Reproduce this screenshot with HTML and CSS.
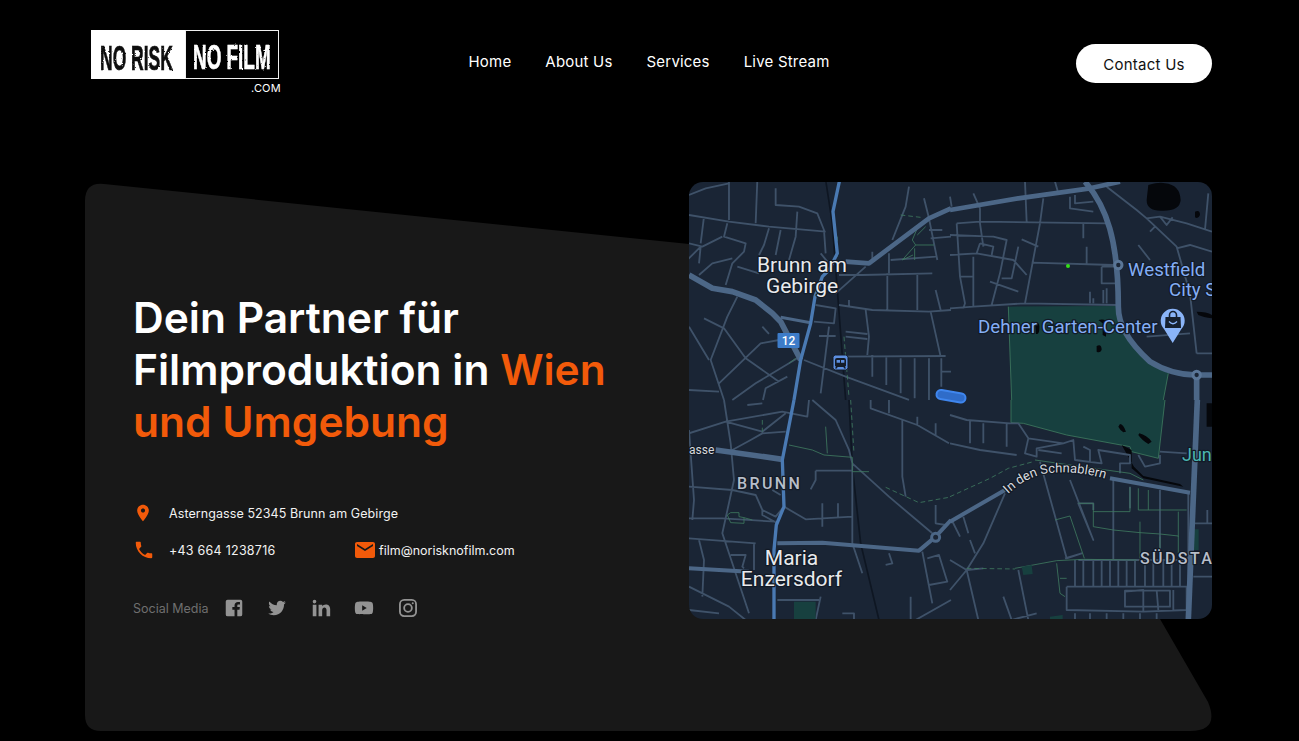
FILE: index.html
```html
<!DOCTYPE html>
<html lang="de">
<head>
<meta charset="utf-8">
<title>No Risk No Film</title>
<link rel="stylesheet" href="styles.css">
</head>
<body>
<div class="page">
  <header class="header">
    <a class="logo" href="#">
      <svg class="logo-svg" width="190" height="66" viewBox="0 0 190 66">
        <defs>
          <filter id="grunge" x="-5%" y="-5%" width="110%" height="110%">
            <feTurbulence type="fractalNoise" baseFrequency="0.7" numOctaves="2" seed="4"/>
            <feDisplacementMap in="SourceGraphic" scale="2.2"/>
          </filter>
        </defs>
        <rect x="0" y="0" width="94" height="49" class="logo-white"/>
        <rect x="94.500" y="0.500" width="93" height="48" class="logo-black"/>
        <g filter="url(#grunge)">
          <text transform="translate(9 39.500) scale(.5 1)" class="logo-word logo-dark">NO RISK</text>
          <text transform="translate(102 38.500) scale(.54 1)" class="logo-word logo-light">NO FILM</text>
        </g>
        <text x="160" y="62" class="logo-com">.COM</text>
      </svg>
    </a>
    <nav class="nav">
      <a href="#">Home</a>
      <a href="#">About Us</a>
      <a href="#">Services</a>
      <a href="#">Live Stream</a>
    </nav>
    <a class="cta" href="#">Contact Us</a>
  </header>

  <section class="hero">
    <svg class="hero-shape" width="1127" height="549" viewBox="0 0 1127 549">
      <path d="M0 19 Q0 0 19 2 L604 62 L1075 437 L1123 520 Q1135 549 1105 549 L16 549 Q0 549 0 533 Z"/>
    </svg>
    <div class="hero-copy">
      <h1 class="title">Dein Partner für<br>Filmproduktion in <span class="accent">Wien<br>und Umgebung</span></h1>
      <div class="contact-row">
        <span class="contact-item address">
          <svg class="ico pin" viewBox="0 0 24 24"><path d="M12 2C8.13 2 5 5.13 5 9c0 5.25 7 13 7 13s7-7.75 7-13c0-3.87-3.13-7-7-7zm0 9.500c-1.380 0-2.500-1.120-2.500-2.500s1.120-2.500 2.500-2.500 2.500 1.120 2.500 2.500-1.120 2.500-2.500 2.500z"/></svg>
          Asterngasse 52345 Brunn am Gebirge
        </span>
      </div>
      <div class="contact-row second">
        <span class="contact-item phone">
          <svg class="ico" viewBox="0 0 24 24"><path d="M6.62 10.79c1.44 2.83 3.76 5.14 6.59 6.59l2.2-2.2c.27-.27.67-.36 1.02-.24 1.12.37 2.33.57 3.57.57.55 0 1 .45 1 1V20c0 .55-.45 1-1 1-9.39 0-17-7.61-17-17 0-.55.45-1 1-1h3.5c.55 0 1 .45 1 1 0 1.25.2 2.45.57 3.57.11.35.03.74-.25 1.02l-2.2 2.2z"/></svg>
          +43 664 1238716
        </span>
        <span class="contact-item mail">
          <svg class="ico mail-ico" viewBox="0 0 24 24"><path d="M20 4H4c-1.1 0-2 .9-2 2v12c0 1.1.9 2 2 2h16c1.1 0 2-.9 2-2V6c0-1.1-.9-2-2-2zm0 4l-8 5-8-5V6l8 5 8-5v2z"/></svg>
          film@norisknofilm.com
        </span>
      </div>
      <div class="social">
        <span class="social-label">Social Media</span>
        <svg class="soc" viewBox="0 0 24 24"><path d="M19 3H5a2 2 0 0 0-2 2v14a2 2 0 0 0 2 2h7.600v-7h-2.400v-3h2.400V9.200c0-2.500 1.500-3.800 3.700-3.800 1 0 1.900.1 2.200.1v2.600h-1.500c-1.200 0-1.400.6-1.400 1.400V11h2.800l-.4 3h-2.400v7H19a2 2 0 0 0 2-2V5a2 2 0 0 0-2-2z"/></svg>
        <svg class="soc" viewBox="-3 -3 30 30"><path d="M23.954 4.569c-.885.389-1.83.654-2.825.775 1.014-.611 1.794-1.574 2.163-2.723-.951.555-2.005.959-3.127 1.184-.896-.959-2.173-1.559-3.591-1.559-2.717 0-4.92 2.203-4.92 4.917 0 .39.045.765.127 1.124C7.691 8.094 4.066 6.13 1.64 3.161c-.427.722-.666 1.561-.666 2.475 0 1.71.87 3.213 2.188 4.096-.807-.026-1.566-.248-2.228-.616v.061c0 2.385 1.693 4.374 3.946 4.827-.413.111-.849.171-1.296.171-.314 0-.615-.03-.916-.086.631 1.953 2.445 3.377 4.604 3.417-1.68 1.319-3.809 2.105-6.102 2.105-.39 0-.779-.023-1.17-.067 2.189 1.394 4.768 2.209 7.557 2.209 9.054 0 13.999-7.496 13.999-13.986 0-.209 0-.42-.015-.63.961-.689 1.8-1.56 2.46-2.548l-.047-.02z"/></svg>
        <svg class="soc" viewBox="0 0 24 24"><path d="M6.94 5a2 2 0 1 1-4-.002 2 2 0 0 1 4 .002zM7 8.48H3V21h4V8.48zm6.32 0H9.34V21h3.94v-6.57c0-3.66 4.77-4 4.77 0V21H22v-7.93c0-6.17-7.06-5.94-8.72-2.91l.04-1.68z"/></svg>
        <svg class="soc" viewBox="0 0 24 24"><path d="M21.500 7.200c-.2-.9-.9-1.600-1.800-1.800C18.200 5 12 5 12 5s-6.200 0-7.700.4c-.9.2-1.600.9-1.800 1.800C2 8.700 2 12 2 12s0 3.300.5 4.800c.2.900.9 1.600 1.800 1.800 1.500.4 7.700.4 7.700.4s6.200 0 7.700-.4c.9-.2 1.600-.9 1.800-1.800.5-1.500.5-4.800.5-4.800s0-3.300-.5-4.800zM10 15V9l5 3-5 3z"/></svg>
        <svg class="soc soc-line" viewBox="0 0 24 24"><rect x="3.200" y="3.200" width="17.600" height="17.600" rx="4.600"/><circle cx="12" cy="12" r="4.200"/><circle cx="17.200" cy="6.800" r="1.100" class="soc-dot"/></svg>
      </div>
    </div>

    <div class="map">
      <svg class="map-svg" width="523" height="437" viewBox="689 182 523 437">
        <defs>
          <path id="schnabel" d="M1008 494 Q1026 477 1048 473 Q1080 470 1112 481"/>
        </defs>
        <rect x="689" y="182" width="523" height="437" class="m-bg"/>

        <!-- top left -->
        <g transform="translate(689 180) scale(.3333)">
          <path class="m-rail" d="M410 0 L430 130 L470 660"/>
          <path class="m-minor" d="M0 45L50 25L120 10M120 0V120M205 0L200 130M260 25V75L330 80L385 100L405 150L410 220M0 105L120 125L240 140L410 155M45 110L35 190M115 130L105 170L170 190L165 215L130 250L110 315M0 190L40 200L100 170M-5 240L35 200L30 250M30 285L70 250L130 235M240 145L225 195L210 225M275 150L260 225M325 95L320 170L300 240M145 260L210 280M145 350L115 410L65 540L105 660M45 415L105 445L170 535L270 605M0 440L60 540M270 480L215 490L90 610M220 440L240 462M325 535L200 610L130 660M0 630L90 635M295 590L230 625L222 660M345 540L470 590L660 660M450 375L550 390L720 395L786 390M480 360V380M530 390L540 470L535 525M440 530L770 528M550 525V590M592 530V615M635 535V640M677 535V655M720 535V660M757 535V620M725 395L755 530M757 575H786M450 285L520 285L730 280M595 280V390M685 285V390M600 220V280M740 330L755 390M605 240L740 230M440 340L530 260M380 375L440 385L435 430L375 425M420 440L410 520L395 640M390 468H440M470 455L535 462M470 470L535 477M705 55L720 115L745 240M660 20L650 80L610 180M720 150L760 150M725 175L786 170M550 215V240M395 220L415 245"/>
          <path class="m-green" d="M685 145L670 180L680 195L640 240L672 225M710 140L685 165M680 195L735 195M677 205V240M320 535L300 550"/>
          <path class="m-green m-dash" d="M465 470L480 650M635 105L695 112M445 170V230"/>
          <path class="m-major" d="M0 285L70 325L130 335L200 360L250 400L275 425L335 540"/>
          <path class="m-mid" d="M275 412L365 428"/>
          <path class="m-major m-thin" d="M470 245L540 250L720 115L786 85"/>
          <path class="m-blue" d="M452 0L432 95L445 220L420 270L400 290L378 350L365 430L335 540L315 660"/>
        </g>

        <!-- top right -->
        <g transform="translate(950 180) scale(.3333)">
          <path class="m-park" d="M175 380L500 378C510 420 530 470 600 540C620 555 650 575 655 580L640 660H185Z"/>
          <path class="m-green" d="M175 380L185 660M655 580L640 660"/>
          <path class="m-water" d="M595 15Q630 5 645 10Q690 15 692 60Q690 92 640 92Q590 95 590 60ZM735 95Q750 88 750 105Q745 118 735 112ZM740 395Q770 395 786 405V415Q760 412 745 405ZM255 428Q270 425 268 445Q268 465 258 462ZM440 498Q455 490 455 510Q450 520 440 515ZM445 420Q470 415 470 430L468 470L458 465L458 430Z"/>
          <path class="m-minor" d="M20 130L90 125L470 130M90 85V130L100 200M225 5L230 125M315 5L325 40M360 50V85L430 95M375 45V70L430 65M70 40L90 85M0 50L5 80M280 55L270 130L225 370M400 130V175M410 200V250M245 248L490 255M455 260H495M455 260V310H495M420 335V370M430 355V370M460 330V370M470 325V370M0 385L70 380L225 370L500 375M20 130L30 290L45 370L40 385M30 290H70M0 165L130 170L170 180L150 280L125 375M90 190L130 200L125 225M90 190L80 220L0 225M80 220L190 240L230 285M205 200L185 295L155 295M215 178L265 200M120 305L205 335M70 230V380M470 20L560 90L590 115L680 200L720 340L740 520M590 115L630 110L710 130L786 155M630 110L650 135L668 112M600 155L615 140M565 195L600 240M680 205L720 195L786 215M775 40L765 150M590 470L720 460M740 520H786"/>
          <path class="m-major m-thin" d="M0 90L205 55L420 25L510 5"/>
          <path class="m-major" d="M405 5C470 80 505 180 505 380C505 430 530 480 600 545C640 570 680 585 740 585V660M740 585H786"/>
          <circle cx="505" cy="255" r="11" class="m-ring"/>
          <circle cx="740" cy="585" r="11" class="m-ring"/>
          <circle cx="354" cy="258" r="6" class="m-dot"/>
        </g>

        <!-- bottom left -->
        <g transform="translate(689 400) scale(.3333)">
          <path class="m-rail" d="M480 0L490 200L515 430L570 660"/>
          <path class="m-minor" d="M105 0L125 130L135 240L100 400L130 490L180 640M0 100L110 65L280 35L355 50L360 0M175 15L220 10M0 90L15 300L10 360M370 0L440 60L480 150L490 190L600 290L730 400M110 65L220 95L290 40M545 0V25L685 75L780 130M600 40V0M640 60V230L650 290M685 50V75M740 70V105M130 150L185 120L220 100L290 95M380 212H490M380 212V240L365 268M0 260L130 270L200 285L220 330L260 350L285 320L350 358L490 350M250 270L275 285M220 330V345L265 370M0 355L100 355L260 365M400 310V380M447 310V350M0 415L200 430M30 420L45 480L40 590M195 430V510M125 465H170L160 500L165 505M740 315V370L770 375M700 455L730 610M715 475L750 465L775 545L720 555M600 460L610 490L590 495M665 590V660M0 560L120 620L170 660M0 630L90 640M265 600H390M395 590L380 660M460 640H495V660M680 660L786 600M490 190V430L520 520"/>
          <path class="m-green" d="M300 135L370 150L405 165L490 172V215L540 215M410 80L415 160M115 345L125 338L150 338L150 350L165 353L190 360M115 345L125 368L165 370V353"/>
          <path class="m-green m-dash" d="M485 0L495 160M220 60V95M590 262L690 308L780 292"/>
          <path class="m-park" d="M315 605H380V660H315Z"/>
          <path class="m-major" d="M80 150L280 178"/>
          <path class="m-major m-mid2" d="M0 505L180 515M265 430L400 428L690 452L740 410L786 360"/>
          <circle cx="740" cy="412" r="12" class="m-ring2"/>
          <path class="m-blue" d="M315 0L280 180L285 320L262 375L255 450L255 660"/>
        </g>

        <!-- bottom right -->
        <g transform="translate(950 400) scale(.3333)">
          <path class="m-park" d="M183 0V68L220 70L350 105L540 140L545 155L625 175L645 0Z"/>
          <path class="m-green" d="M183 0V68L220 70L350 105L540 140L545 155L625 175L645 0"/>
          <path class="m-water" d="M510 72Q520 72 528 95L520 97Q510 90 505 80ZM568 100Q590 105 605 125L595 132Q575 120 565 105ZM770 10H786V80H770ZM515 135L545 150L545 205L580 235L700 260L690 252L580 228L552 200Z"/>
          <path class="m-minor" d="M0 45L50 60L180 70L205 70L235 115L225 160L260 170L260 145L340 130L370 120L375 180L455 190L445 150L540 165L540 190L510 190V220M0 130L90 150L200 165M100 70V130M60 60V130M170 70V140M235 115L340 130M265 150L335 160M400 140L420 150V185M270 185L350 475L395 460L345 475M360 240L430 420L385 310H430V330M490 240V480M540 260V325M630 270V480M715 280L715 660M385 480H710M375 480V560M400 480V560M430 480V560M455 480V560M480 480V560M505 480V560M530 480V560M555 480V560M585 480V560M610 480V560M640 480V560M665 480V560M690 480V560M350 560H710V630L580 635L350 630V560M525 572H660V620H525ZM525 575L580 570L580 632M620 570L625 630M670 570V630M375 640V660M420 640V660M470 640V660M520 640V660M570 640V660M620 640V660M630 155L710 160M565 165L585 200L630 190V165M730 370H786M772 330V370M730 530H786M0 480L50 510L100 430L165 280M5 360L30 410M40 350L55 400M60 420L75 460M0 570L50 510L85 660M50 510L100 505M205 510L235 660M160 590L185 660M185 660L260 640"/>
          <path class="m-green" d="M195 505L320 482L400 478L560 480M320 490L330 580L345 590M330 535H350M315 360L360 348L403 475M385 310H430L430 380L490 390L570 398L630 402L685 408V460M430 335H540V262M565 265V330H710M595 270V330M570 365V475M630 410V480M685 335V410M255 180L360 195L540 220L580 240"/>
          <path class="m-green m-dash" d="M0 290L120 235L175 205L250 185M50 505L195 507"/>
          <path class="m-park" d="M215 500L245 495L248 522L220 525ZM300 650L338 645V660H300ZM730 388H746V450H730Z"/>
          <path class="m-major m-mid3" d="M0 365L165 270M480 235L720 278"/>
          <path class="m-major" d="M742 0L715 660"/>
        </g>

        <rect x="777.500" y="333" width="22" height="15" rx="1" class="m-shield"/>
        <text x="788.500" y="345" class="m-shield-t">12</text>
        <rect x="833" y="355" width="15" height="15" rx="2.500" class="m-transit"/>
        <path class="m-transit-i" d="M837 358H844Q846 358 846 360V365.500Q846 366.500 845 366.500L846 368.500H844L843.500 367H837.500L837 368.500H835L836 366.500Q835 366.500 835 365.500V360Q835 358 837 358ZM836.600 360V362.800H840V360ZM841 360V362.800H844.400V360Z"/>
        <path class="m-route-o" d="M941 394.500L961 398"/>
        <path class="m-route-i" d="M941 394.500L961 398"/>

        <path class="m-poi" d="M1172.700 343L1164 329A12 12 0 1 1 1181.400 329Z"/>
        <path class="m-poi-bag" d="M1165.500 317H1180.500L1181 328H1165Z"/>
        <path class="m-poi-i" d="M1169.500 317V315A3.500 3.500 0 0 1 1176.500 315V317"/>
        <path class="m-poi-s" d="M1169 321.500Q1173 326 1177 321.500"/>

        <text x="802" y="272" class="m-label">Brunn am</text>
        <text x="802" y="293" class="m-label">Gebirge</text>
        <text x="791.500" y="565" class="m-label">Maria</text>
        <text x="791.500" y="586" class="m-label">Enzersdorf</text>
        <text x="737" y="489" class="m-area">BRUNN</text>
        <text x="1140" y="564" class="m-area">SÜDSTA</text>
        <text x="689" y="454" class="m-street">asse</text>
        <text class="m-street m-road"><textPath href="#schnabel">In den Schnablern</textPath></text>
        <text x="1128" y="276" class="m-poi-t">Westfield</text>
        <text x="1169" y="296" class="m-poi-t">City S</text>
        <text x="978" y="333" class="m-poi-t">Dehner Garten-Center</text>
        <text x="1182" y="461" class="m-teal">Jun</text>
      </svg>
    </div>
  </section>
</div>
</body>
</html>
```

FILE: styles.css
```css
* { box-sizing: border-box; }

html, body {
  margin: 0;
  background: #000;
}

body {
  font-family: "Inter", "Liberation Sans", sans-serif;
  color: #fff;
  overflow: hidden;
}

a {
  color: inherit;
  text-decoration: none;
}

.page {
  width: 1299px;
  height: 741px;
  padding: 30px 87px 10px 85px;
}

/* header */
.header {
  display: flex;
  align-items: flex-start;
  height: 152px;
  padding-left: 6px;
}

.logo {
  display: block;
  width: 190px;
  height: 66px;
}

.logo-svg { display: block; }
.logo-white { fill: #fff; }
.logo-black { fill: #000; stroke: #f0f0f0; stroke-width: 1; }

.logo-word {
  font-family: "Liberation Sans", sans-serif;
  font-weight: 700;
  font-size: 35px;
  stroke-width: .7px;
}

.logo-dark { fill: #111; stroke: #111; }
.logo-light { fill: #fff; stroke: #fff; }

.logo-com {
  font-family: "Inter", sans-serif;
  font-size: 11px;
  letter-spacing: .2px;
  fill: #fff;
}

.nav {
  display: flex;
  gap: 34px;
  margin-left: 187.500px;
  padding-top: 22px;
  font-size: 15px;
  line-height: 19px;
  letter-spacing: .2px;
}

.cta {
  margin-left: auto;
  margin-top: 14px;
  width: 136px;
  height: 39px;
  border-radius: 20px;
  background: #fff;
  color: #111;
  font-size: 15px;
  letter-spacing: .25px;
  line-height: 41px;
  text-align: center;
}

/* hero */
.hero {
  position: relative;
  display: flex;
  justify-content: space-between;
  align-items: flex-start;
  width: 1127px;
  height: 549px;
}

.hero-shape {
  position: absolute;
  left: 0;
  top: 0;
  fill: #181818;
}

.hero-copy {
  position: relative;
  width: 580px;
  padding: 110px 0 0 48px;
}

.title {
  margin: 0 0 54px;
  font-size: 42.500px;
  line-height: 52px;
  font-weight: 600;
}

.accent { color: #f25a0a; }

.contact-row {
  display: flex;
  align-items: center;
  height: 22px;
  font-size: 12.500px;
  color: #f2f2f2;
}

.contact-row.second { margin-top: 15px; }

.contact-item {
  display: flex;
  align-items: center;
}

.address { letter-spacing: .08px; }

.ico {
  flex: none;
  width: 22px;
  height: 22px;
  margin-right: 14px;
  fill: #f25a0a;
}

.pin {
  width: 20px;
  height: 20px;
  margin-right: 16px;
}

.phone {
  width: 221px;
  letter-spacing: .25px;
}

.mail-ico {
  width: 24px;
  height: 24px;
  margin-right: 2px;
  margin-left: -1px;
}

.social {
  display: flex;
  align-items: center;
  gap: 21.600px;
  margin-top: 36px;
}

.social-label {
  margin-right: -7.600px;
  font-size: 12.500px;
  color: #6f6f6f;
}

.soc {
  width: 22px;
  height: 22px;
  fill: #939393;
}

.soc-line {
  fill: none;
  stroke: #939393;
  stroke-width: 2;
}

.soc-dot {
  fill: #939393;
  stroke: none;
}

/* map */
.map {
  position: relative;
  width: 523px;
  height: 437px;
  border-radius: 14px;
  overflow: hidden;
}

.map-svg { display: block; }
.m-bg { fill: #1a2535; }

.m-minor, .m-green, .m-major, .m-blue, .m-mid, .m-rail, .m-ring, .m-ring2,
.m-route-o, .m-route-i, .m-poi-i, .m-poi-s {
  fill: none;
  stroke-linejoin: round;
}

.m-minor { stroke: #3f5269; stroke-width: 5.500; }
.m-green { stroke: #3f7a5f; stroke-width: 2.500; }
.m-dash { stroke-dasharray: 14 9; }
.m-major { stroke: #4c6787; stroke-width: 17; }
.m-thin { stroke-width: 14; }
.m-mid { stroke: #4c6787; stroke-width: 9; }
.m-mid2 { stroke-width: 12; }
.m-mid3 { stroke-width: 12; }
.m-blue { stroke: #4a7ab3; stroke-width: 10; }
.m-rail { stroke: #0e1622; stroke-width: 5; }
.m-park { fill: #17403f; }
.m-water { fill: #05070b; }
.m-ring { stroke: #5a7697; stroke-width: 9; fill: #1a2535; }
.m-ring2 { stroke: #4c6787; stroke-width: 9; fill: #1a2535; }
.m-dot { fill: #35e019; }
.m-shield { fill: #3d7cc9; }
.m-transit { fill: #5d8fe0; stroke: #141c29; stroke-width: 1; }
.m-transit-i { fill: #141c29; fill-rule: evenodd; }
.m-route-o { stroke: #3f86ee; stroke-width: 11; stroke-linecap: round; }
.m-route-i { stroke: #2f6cc9; stroke-width: 7; stroke-linecap: round; }
.m-poi { fill: #8ab4f8; }
.m-poi-bag { fill: #16202e; }
.m-poi-i { stroke: #16202e; stroke-width: 1.600; }
.m-poi-s { stroke: #8ab4f8; stroke-width: 1.300; }

.m-label, .m-area, .m-street, .m-poi-t, .m-teal, .m-shield-t {
  font-family: "Roboto", sans-serif;
  paint-order: stroke;
  stroke: #121a26;
  stroke-width: 2.500px;
  stroke-linejoin: round;
}

.m-label {
  font-size: 21px;
  fill: #e8eaed;
  text-anchor: middle;
}

.m-area {
  font-size: 16px;
  font-weight: 500;
  letter-spacing: 2.400px;
  fill: #b7bec9;
}

.m-street {
  font-size: 12px;
  fill: #d6d9de;
}

.m-road { font-size: 13px; }

.m-poi-t {
  font-size: 18.700px;
  fill: #84aef5;
}

.m-teal {
  font-size: 18px;
  fill: #4bb5b0;
}

.m-shield-t {
  font-size: 12px;
  font-weight: 500;
  fill: #fff;
  stroke: none;
  text-anchor: middle;
}
```
